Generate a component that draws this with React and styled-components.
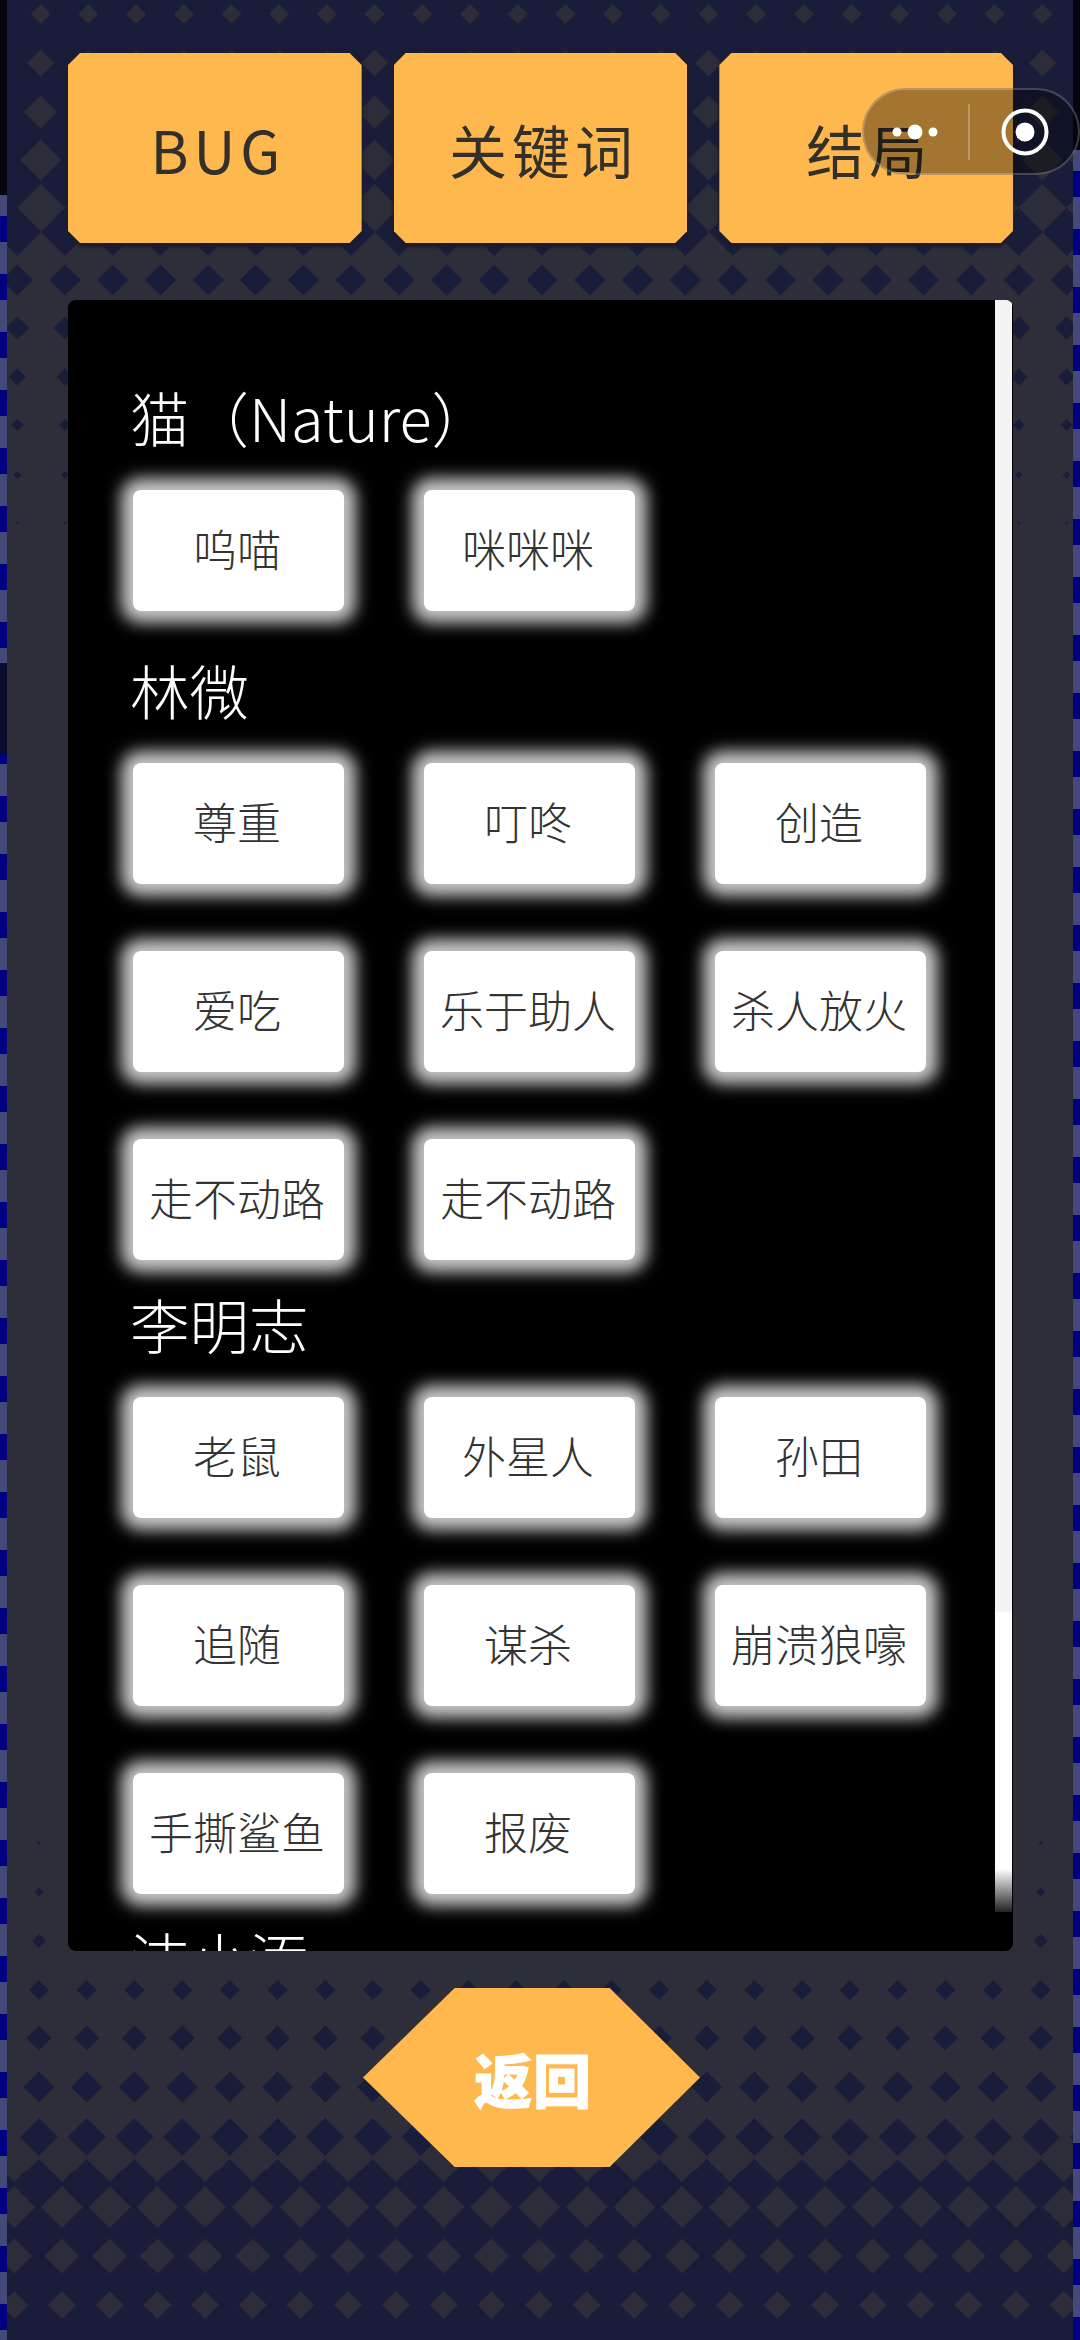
import styled, { createGlobalStyle } from "styled-components";

// background rows: [y, width of the diamond]
const topGray = [[14, 20], [63, 27], [112, 33], [160, 41], [208, 48]];
const topNavy = [[232, 48], [280, 31], [328, 23], [377, 17], [425, 12], [475, 8], [523, 3]];
const bottomNavy = [[1843, 4], [1892, 9], [1941, 14], [1990, 20], [2038, 25], [2087, 31], [2137, 38], [2183, 48]];
const bottomGray = [[2158, 48], [2207, 42], [2256, 35], [2305, 28]];

const NAVY = "#1a1d3a";
const GRAY = "#2d2e3a";
const DIAMOND_GRAY = "#2c2d38";
const STEP = 47.7;

const sections = [
  { name: "猫（Nature）", first: true, chips: ["呜喵", "咪咪咪"] },
  { name: "林微", chips: ["尊重", "叮咚", "创造", "爱吃", "乐于助人", "杀人放火", "走不动路", "走不动路"] },
  { name: "李明志", chips: ["老鼠", "外星人", "孙田", "追随", "谋杀", "崩溃狼嚎", "手撕鲨鱼", "报废"] },
  { name: "洁小添", chips: [] },
];

const GlobalStyle = createGlobalStyle`
  html, body {
    margin: 0;
    padding: 0;
    background: ${GRAY};
  }
  * {
    box-sizing: border-box;
  }
`;

const Page = styled.div`
  position: relative;
  display: flex;
  width: 1080px;
  height: 2340px;
  overflow: hidden;
  font-family: "Noto Sans CJK SC", "Noto Sans", sans-serif;
`;

const Strip = styled.div`
  flex: none;
  width: 7px;
  background-color: #45497a;
  background-image:
    linear-gradient(#05060f, #05060f),
    linear-gradient(#0b0d2c, #0b0d2c),
    repeating-linear-gradient(#000080 0 26px, #45497a 26px 58px);
  background-repeat: no-repeat;
  background-size: 100% ${(p) => p.$cap}px, 100% ${(p) => (p.$right ? 0 : 90)}px, 100% 100%;
  background-position: 0 0, 0 663px, 0 ${(p) => p.$cap + 21}px;
`;

const Screen = styled.main`
  position: relative;
  flex: 1;
  display: flex;
  flex-direction: column;
  padding: 53px 60px 0 61px;
  background: ${NAVY};
`;

const Pattern = styled.svg`
  position: absolute;
  left: 0;
  top: 0;
  width: 1066px;
  height: 2340px;
`;

const Tabs = styled.nav`
  position: relative;
  display: grid;
  grid-template-columns: repeat(3, 1fr);
  gap: 32px;
`;

const Tab = styled.div`
  filter: drop-shadow(0 3px 1px #1c1c28) drop-shadow(0 0 2px #1c1c28);
`;

const TabFace = styled.div`
  display: flex;
  align-items: center;
  justify-content: center;
  height: 190px;
  padding: 2px 0 0 6px;
  background: #ffb84d;
  color: #33302c;
  font-size: 58px;
  letter-spacing: 5px;
  clip-path: polygon(
    12px 0, calc(100% - 12px) 0, 100% 12px, 100% calc(100% - 12px),
    calc(100% - 12px) 100%, 12px 100%, 0 calc(100% - 12px), 0 12px
  );
`;

const Panel = styled.section`
  position: relative;
  height: 1651px;
  margin-top: 57px;
  padding: 76px 0 0 65px;
  overflow: hidden;
  background: #000;
  border-radius: 8px;
`;

const Group = styled.div`
  margin-bottom: ${(p) => (p.$first ? 38 : 23)}px;
`;

const Heading = styled.h2`
  height: 86px;
  margin: 0 0 28px -3px;
  color: #fff;
  font-size: 59.5px;
  font-weight: 300;
  line-height: 80px;
`;

const ChipGrid = styled.div`
  display: grid;
  grid-template-columns: repeat(3, 211px);
  gap: 67px 80px;
`;

const Chip = styled.div`
  display: flex;
  align-items: center;
  justify-content: center;
  height: 121px;
  padding: 0 3px 5px 0;
  background: #fff;
  border-radius: 8px;
  box-shadow: 0 0 16px 12px #c8c8c8;
  color: #333;
  font-size: 44px;
  font-weight: 300;
  white-space: nowrap;
`;

const ScrollTrack = styled.div`
  position: absolute;
  top: 0;
  right: 1px;
  width: 17px;
  height: 1612px;
  background: linear-gradient(#fff calc(100% - 43px), #222 100%);
`;

const ScrollThumb = styled.div`
  height: 1312px;
  background: #f4f4f4;
  border-radius: 3px;
`;

const BackButton = styled.button`
  position: relative;
  display: flex;
  align-items: center;
  justify-content: center;
  align-self: flex-start;
  width: 337px;
  height: 179px;
  margin: 37px 0 0 295px;
  padding: 0 0 0 3px;
  border: 0;
  background: #ffb84d;
  color: #fff;
  font-family: inherit;
  font-size: 58px;
  font-weight: 900;
  letter-spacing: 1px;
  -webkit-text-stroke: 1px #fff;
  clip-path: polygon(27.2% 0, 73.2% 0, 100% 50%, 73.2% 100%, 27.2% 100%, 0 50%);
`;

const Capsule = styled.div`
  position: absolute;
  top: 88px;
  left: 862px;
  display: flex;
  align-items: center;
  width: 218px;
  height: 87px;
  background: rgba(0, 0, 0, 0.36);
  border: 2px solid rgba(255, 255, 255, 0.22);
  border-radius: 44px;
`;

const CapsuleIcon = styled.svg`
  flex: none;
  display: block;
`;

const CapsuleLine = styled.div`
  flex: none;
  width: 2px;
  height: 56px;
  background: rgba(255, 255, 255, 0.25);
`;

function Diamonds({ rows, x0, fill }) {
  return rows.flatMap(([y, w]) =>
    Array.from({ length: 24 }, (_, i) => {
      const x = x0 + i * STEP;
      const r = w / 2;
      return (
        <polygon
          key={`${y}-${i}`}
          points={`${x - r},${y} ${x},${y - r} ${x + r},${y} ${x},${y + r}`}
          fill={fill}
        />
      );
    })
  );
}

export default function App() {
  return (
    <Page>
      <GlobalStyle />
      <Strip $cap={195} />
      <Screen>
        <Pattern viewBox="7 0 1066 2340">
          <rect x="0" y="220" width="1080" height="1950" fill={GRAY} />
          <Diamonds rows={topGray} x0={40.7} fill={DIAMOND_GRAY} />
          <Diamonds rows={topNavy} x0={17.3} fill={NAVY} />
          <Diamonds rows={bottomNavy} x0={39} fill={NAVY} />
          <Diamonds rows={bottomGray} x0={14.3} fill={DIAMOND_GRAY} />
        </Pattern>
        <Tabs>
          {["BUG", "关键词", "结局"].map((t) => (
            <Tab key={t}>
              <TabFace>{t}</TabFace>
            </Tab>
          ))}
        </Tabs>
        <Panel>
          {sections.map((s) => (
            <Group key={s.name} $first={s.first}>
              <Heading>{s.name}</Heading>
              <ChipGrid>
                {s.chips.map((c, i) => (
                  <Chip key={i}>{c}</Chip>
                ))}
              </ChipGrid>
            </Group>
          ))}
          <ScrollTrack>
            <ScrollThumb />
          </ScrollTrack>
        </Panel>
        <BackButton>返回</BackButton>
      </Screen>
      <Strip $cap={150} $right />
      <Capsule>
        <CapsuleIcon width="104" height="83" viewBox="0 0 104 83">
          <circle cx="33" cy="42" r="4.5" fill="#fff" />
          <circle cx="51" cy="42" r="7.5" fill="#fff" />
          <circle cx="69" cy="42" r="4.5" fill="#fff" />
        </CapsuleIcon>
        <CapsuleLine />
        <CapsuleIcon width="108" height="83" viewBox="0 0 108 83">
          <circle cx="55" cy="42" r="21.5" fill="none" stroke="#fff" strokeWidth="4" />
          <circle cx="55" cy="42" r="9.5" fill="#fff" />
        </CapsuleIcon>
      </Capsule>
    </Page>
  );
}
